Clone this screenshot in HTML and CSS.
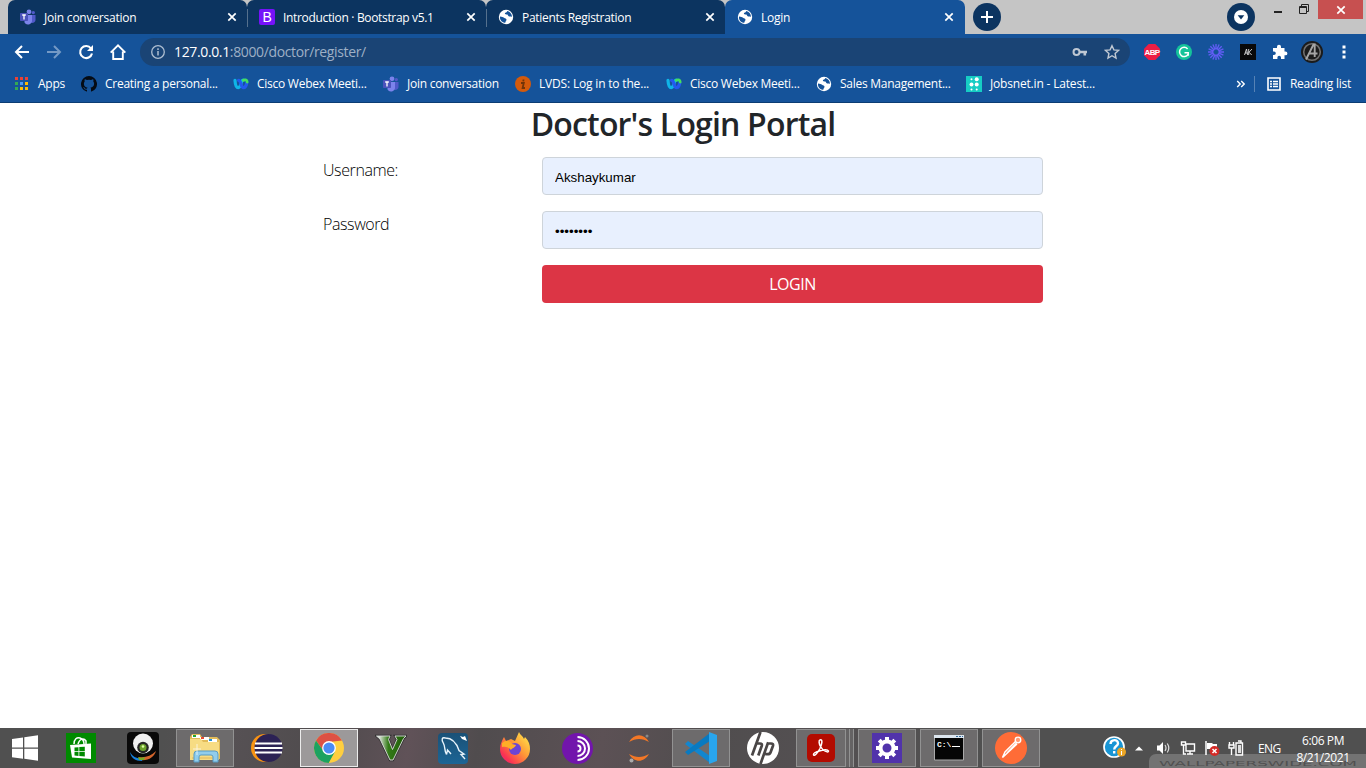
FILE: index.html
```html
<!DOCTYPE html>
<html lang="en">
<head>
<meta charset="utf-8">
<title>Login</title>
<link rel="stylesheet" href="styles.css">
</head>
<body>
<svg class="defs" width="0" height="0">
  <symbol id="teams" viewBox="0 0 16 16"><circle cx="9" cy="2.8" r="2.4" fill="#7b83eb"/><circle cx="13.3" cy="3.6" r="1.7" fill="#5059c9"/><path d="M10 6h5.5v5a3 3 0 0 1-4.5 2.5z" fill="#5059c9"/><path d="M4.500 6H12v5.500a4 4 0 0 1-7.500 2z" fill="#7b83eb"/><rect y="4" width="8" height="8" rx=".8" fill="#4b53bc"/><path d="M2.200 6h3.600M4 6v4.500" stroke="#fff" stroke-width="1.300"/></symbol>
  <symbol id="globe" viewBox="0 0 16 16"><circle cx="8" cy="8" r="7.200" fill="#fff"/><path d="M2 7.400c2 .4 3 .4 4 1.400 1 .9 2.500.5 2.500 2 0 1.100-1 1.300-1.200 3C4 13.500 1.600 11 2 7.400zM9.200 2c-.2 1.500-2 1.500-2.300 2.300-.3 1.100 1.300 1.300 2.300 1.300.9.100.7 1.700 1.900 1.800 1.300.1 1.800-.3 2.900.6 0-3-2-5.500-4.800-6z" fill="#15539a"/></symbol>
  <symbol id="webex" viewBox="0 0 16 16"><path d="M2 4.300C2.300 9 3.300 11.700 5.200 11.700S7.700 9 8.300 6.500 9.500 4 10.500 4" fill="none" stroke="#0fb5e8" stroke-width="3.200" stroke-linecap="round"/><path d="M5.600 4.300C8.300 4.300 7.500 11.700 10.500 11.700 12.600 11.700 13.300 9.500 13.800 7" fill="none" stroke="#2459ed" stroke-width="3.300" stroke-linecap="round"/><path d="M10.300 4.200C11.500 3.500 14.200 3.600 14.200 6" fill="none" stroke="#45df60" stroke-width="2.800" stroke-linecap="round"/></symbol>
  <symbol id="close" viewBox="0 0 10 10"><path d="M1.300 1.300l7.400 7.400M8.700 1.300L1.300 8.700" stroke="#fff" stroke-width="1.700"/></symbol>
</svg>

<header class="browser">
  <div class="tabstrip">
    <div class="tab tab-first"><svg class="ico"><use href="#teams"/></svg><span>Join conversation</span><svg class="close"><use href="#close"/></svg></div>
    <div class="tab"><b class="boot">B</b><span>Introduction · Bootstrap v5.1</span><svg class="close"><use href="#close"/></svg></div>
    <div class="tab"><svg class="ico"><use href="#globe"/></svg><span>Patients Registration</span><svg class="close"><use href="#close"/></svg></div>
    <div class="tab active"><svg class="ico"><use href="#globe"/></svg><span>Login</span><svg class="close"><use href="#close"/></svg></div>
    <svg class="newtab" viewBox="0 0 28 28"><circle cx="14" cy="14" r="14" fill="#0c3460"/><path d="M8 14h12M14 8v12" stroke="#fff" stroke-width="2"/></svg>
    <svg class="tabsearch" viewBox="0 0 28 28"><circle cx="14" cy="14" r="14" fill="#0c3460"/><circle cx="14" cy="14" r="7" fill="#fff"/><path d="M10.700 12.300h6.600L14 16.600z" fill="#0c3460"/></svg>
    <svg class="winctl" viewBox="0 0 46 20"><path d="M4 12h8" stroke="#222" stroke-width="2"/><path d="M29.500 6.500h7v7h-7zM29 7.500h8M31.500 6V4.500h7v7H37" fill="none" stroke="#222"/></svg>
    <div class="winclose"><svg class="wx"><use href="#close"/></svg></div>
  </div>

  <div class="toolbar">
    <svg class="nav" viewBox="0 0 16 16"><path d="M15 8H2.500M8 2L2 8l6 6" fill="none" stroke="#fff" stroke-width="2"/></svg>
    <svg class="nav" viewBox="0 0 16 16"><path d="M1 8h12.500M8 2l6 6-6 6" fill="none" stroke="#7499c5" stroke-width="2"/></svg>
    <svg class="nav" viewBox="0 0 16 16"><path d="M13 4.500A6 6 0 1 0 14 9.500" fill="none" stroke="#fff" stroke-width="2.100"/><path d="M15 1v6H9z" fill="#fff"/></svg>
    <svg class="nav" viewBox="0 0 16 16"><path d="M.7 8.700L8 1.400l7.300 7.300M3.200 7.500V15h9.600V7.500" fill="none" stroke="#fff" stroke-width="1.900"/></svg>
    <div class="omnibox">
      <svg class="info" viewBox="0 0 16 16"><circle cx="8" cy="8" r="6.300" fill="none" stroke="#aebed1" stroke-width="1.300"/><path d="M8 7v4.500M8 4.300V6" stroke="#aebed1" stroke-width="1.500"/></svg>
      <span class="url"><span class="host">127.0.0.1</span>:8000/doctor/register/</span>
      <svg class="key" viewBox="0 0 16 16"><circle cx="4.500" cy="8" r="3" fill="none" stroke="#bfc8d3" stroke-width="2"/><path d="M7 8h8M12.800 8v3.500" stroke="#bfc8d3" stroke-width="2.600"/></svg>
      <svg class="star" viewBox="0 0 16 16"><path d="M8 1.700l1.900 4.200 4.600.5-3.400 3.100.9 4.500L8 11.700 4 14l.9-4.500-3.400-3.100 4.600-.5z" fill="none" stroke="#c1c9d3" stroke-width="1.400"/></svg>
    </div>
    <div class="exts">
      <svg class="ext" viewBox="0 0 16 16"><path d="M4.700 0h6.600L16 4.700v6.600L11.300 16H4.700L0 11.300V4.700z" fill="#ed1e45"/><text x="8" y="10.900" class="abp">ABP</text></svg>
      <svg class="ext" viewBox="0 0 16 16"><circle cx="8" cy="8" r="8" fill="#15c39a"/><path d="M11.600 4.900A4.600 4.600 0 1 0 12 10.500M8.500 8.800h3.700v3" fill="none" stroke="#fff" stroke-width="1.500"/></svg>
      <svg class="ext" viewBox="0 0 16 16"><path d="M8 0v5.500M8 10.500V16M0 8h5.500M10.500 8H16M2.300 2.300l4 4M9.700 9.700l4 4M13.700 2.300l-4 4M6.300 9.700l-4 4M4.900.6l2.200 5M8.900 10.400l2.200 5M11.100.6l-2.200 5M7.100 10.400l-2.200 5M.6 4.900l5 2.200M10.400 8.900l5 2.200M.6 11.100l5-2.200M10.400 7.100l5-2.200" stroke="#625df5" stroke-width="1.350"/></svg>
      <svg class="ext" viewBox="0 0 16 16"><path d="M0 0h16v16H0z" fill="#090909"/><path d="M4.500 11l2-6 1.200 6M5 9h2.500M8.700 5v6M12 5L9 8.200l2.700 2.800" fill="none" stroke="#ddd" stroke-width=".9"/></svg>
      <svg class="ext" viewBox="0 0 16 16"><path d="M1 4h4V2.800a2 2 0 0 1 4 0V4h3.500v3.500h1a1.900 1.900 0 0 1 0 3.800h-1V15H9v-1.500a1.800 1.800 0 0 0-3.600 0V15H1v-4h1a1.800 1.800 0 0 0 0-3.600H1z" fill="#fff"/></svg>
      <svg class="avatar" viewBox="0 0 22 22"><circle cx="11" cy="11" r="11" fill="#1b1b1b"/><circle cx="11" cy="11" r="8.300" fill="none" stroke="#707070" stroke-width="1.600"/><path d="M5 18.500L12.500 3.500h1.200V16M8 12.500h8.500" fill="none" stroke="#a5a5a5" stroke-width="1.900"/></svg>
      <svg class="dots" viewBox="0 0 4 16"><path d="M.5 1.500h3v3h-3zM.5 6.500h3v3h-3zM.5 11.500h3v3h-3z" fill="#fff"/></svg>
    </div>
  </div>

  <div class="bookmarks">
    <div class="bm w67"><svg class="ico" viewBox="0 0 16 16"><path d="M1 1h3v3H1zM6 1h3v3H6zM11 1h3v3h-3z" fill="#ea4335"/><path d="M1 6h3v3H1z" fill="#34a853"/><path d="M6 6h3v3H6z" fill="#4c9bf5"/><path d="M11 6h3v3h-3zM6 11h3v3H6zM11 11h3v3h-3z" fill="#fbbc05"/><path d="M1 11h3v3H1z" fill="#34a853"/></svg><span>Apps</span></div>
    <div class="bm w152"><svg class="ico" viewBox="0 0 16 16"><path d="M8 0a8 8 0 0 0-2.500 15.600c.4.100.5-.2.500-.4v-1.500c-2.200.5-2.700-.9-2.700-.9-.4-.9-.9-1.200-.9-1.200-.7-.5.100-.5.100-.5.800.1 1.200.8 1.200.8.7 1.300 1.900.9 2.300.7.100-.5.300-.9.500-1.100-1.800-.2-3.600-.9-3.600-4 0-.8.300-1.600.8-2.100-.1-.2-.4-1 .1-2.100 0 0 .7-.2 2.200.8a7 7 0 0 1 4 0c1.500-1 2.200-.8 2.200-.8.400 1.100.2 1.900.1 2.100.5.600.8 1.300.8 2.100 0 3.100-1.900 3.800-3.700 4 .3.300.6.800.6 1.500v2.200c0 .2.100.5.500.4A8 8 0 0 0 8 0z" fill="#050b14"/></svg><span>Creating a personal...</span></div>
    <div class="bm w150"><svg class="ico"><use href="#webex"/></svg><span>Cisco Webex Meeti...</span></div>
    <div class="bm w132"><svg class="ico"><use href="#teams"/></svg><span>Join conversation</span></div>
    <div class="bm w151 wide"><svg class="ico" viewBox="0 0 16 16"><circle cx="8" cy="8" r="8" fill="#d45a0b"/><path d="M6 7h2.800l-1.200 5H10M8.500 3.500L8.300 5.300" fill="none" stroke="#713408" stroke-width="1.800"/></svg><span>LVDS: Log in to the...</span></div>
    <div class="bm w150"><svg class="ico"><use href="#webex"/></svg><span>Cisco Webex Meeti...</span></div>
    <div class="bm w150"><svg class="ico"><use href="#globe"/></svg><span>Sales Management...</span></div>
    <div class="bm wide"><svg class="ico" viewBox="0 0 16 16"><path d="M0 0h16v16H0z" fill="#16cdc4"/><g fill="#fff"><circle cx="5.500" cy="3.300" r="1"/><circle cx="10.700" cy="3.300" r="2"/><circle cx="5.500" cy="8.500" r="2"/><circle cx="10.700" cy="8.500" r="2"/><circle cx="5.500" cy="13.500" r="1"/><circle cx="10.700" cy="13.500" r="1"/></g></svg><span>Jobsnet.in - Latest...</span></div>
    <div class="reading"><svg class="chev" viewBox="0 0 8 8"><path d="M.7 1l3 3-3 3M4.700 1l3 3-3 3" fill="none" stroke="#fff" stroke-width="1.400"/></svg><i class="sep"></i><svg class="list" viewBox="0 0 14 14"><path d="M1 1h12v12H1z" fill="none" stroke="#fff" stroke-width="1.600"/><path d="M3 4.500h2M6 4.500h5M3 7h2M6 7h5M3 9.500h2M6 9.500h5" stroke="#fff" stroke-width="1.300"/></svg><span>Reading list</span></div>
  </div>
</header>

<main class="page">
  <h1 class="title">Doctor's Login Portal</h1>
  <form class="form">
    <label class="label" for="user">Username:</label><input class="field" id="user" type="text" value="Akshaykumar">
    <label class="label" for="pass">Password</label><input class="field" id="pass" type="password" value="12345678">
    <button class="login" type="button">LOGIN</button>
  </form>
</main>

<footer class="taskbar">
  <div class="slot start"><svg width="28" height="26" viewBox="0 0 28 26"><path d="M1 4l11-1.600v10H1zM13.300 2.200L27 .2v12.200H13.300zM1 13.700h11v10L1 22.200zM13.300 13.700H27v12.100L13.300 23.800z" fill="#fff"/></svg></div>
  <div class="slot"><svg width="30" height="30" viewBox="0 0 30 30"><path d="M0 0h30v30H0z" fill="#008a00"/><path d="M4 12l21-1.500V26L6 24.500z" fill="#fff"/><path d="M8 11c0-5 3-7 6-6s4 3 4 6M12 11c2-6 6-6 8-3v3" fill="none" stroke="#fff" stroke-width="1.500"/><path d="M8.500 14.500l4-.3v4h-4zM13.300 14.100l5.500-.4v4.500h-5.500zM8.500 19h4v4l-4-.4zM13.300 19h5.500v4.600l-5.500-.5z" fill="#008a00"/></svg></div>
  <div class="slot"><svg width="32" height="32" viewBox="0 0 32 32"><rect width="32" height="32" rx="4" fill="#090909"/><path d="M3 20c3 6 9 7 13 6l-1 3C8 29 4 26 3 20z" fill="#1682df"/><path d="M12 25c6 1 12-1 17-6-2 6-7 10-16 9z" fill="#d4652c"/><path d="M11 25c2 1 5 1 7 0l-1 3h-5z" fill="#75a928"/><circle cx="16" cy="11.500" r="10" fill="#f0f0f0"/><circle cx="16" cy="15.500" r="5.800" fill="#252525"/><circle cx="16" cy="15.500" r="3.500" fill="#6ba12b"/><circle cx="16" cy="14.500" r="1.300" fill="#dfffa5"/></svg></div>
  <div class="slot open"><svg width="34" height="32" viewBox="0 0 34 32"><path d="M2 5l2-3h8l2 3h15l3 3v19H2z" fill="#e1bb59"/><path d="M4 3h8v3H4zM12 5h9v3h-9zM20 7h9v3h-9z" fill="#fff"/><path d="M5 3h3v2H5z" fill="#24a32f"/><path d="M13 5h3v2h-3z" fill="#e64c30"/><path d="M21 7h3v2h-3z" fill="#2491d6"/><path d="M2 7h11l2 3h16v18H2z" fill="#f7dc83"/><path d="M4 26h24" stroke="#dfb65b"/><path d="M6 30v-8q0-3 3-3h18q3 0 3 3v8h-5v-5q0-2-2-2H13q-2 0-2 2v5z" fill="#91cdec" stroke="#579bc5"/><path d="M9 12v11M5 17h8" stroke="#fff" opacity=".7"/></svg></div>
  <div class="slot"><svg width="34" height="30" viewBox="0 0 34 30"><circle cx="15" cy="15" r="14" fill="#f99413"/><circle cx="18.500" cy="15" r="14" fill="#2c2255"/><path d="M5 10.500h27M4.500 15h28M5 19.500h27" stroke="#fff" stroke-width="2"/></svg></div>
  <div class="slot open current"><svg width="30" height="30" viewBox="0 0 30 30"><circle cx="15" cy="15" r="15" fill="#ffcf3f"/><path d="M2 7.500A15 15 0 0 1 28 7.500L15 9l-5.500 9z" fill="#dd5144"/><path d="M2 7.500A15 15 0 0 0 14.700 30L21 18.500 9.500 18z" fill="#1ca261"/><circle cx="15" cy="15" r="6.900" fill="#fff"/><circle cx="15" cy="15" r="5.600" fill="#4b8bf4"/></svg></div>
  <div class="slot"><svg width="32" height="28" viewBox="0 0 32 28"><defs><linearGradient id="vee" x1="0" x2="1"><stop offset=".1" stop-color="#dce5d8"/><stop offset=".4" stop-color="#347b19"/><stop offset="1" stop-color="#1f5c08"/></linearGradient></defs><path d="M1.500 2H15l-1.500 3.500 4 10L22 5.500 20 2h11l-2.500 2.500L18 26h-3L5 5z" fill="url(#vee)" stroke="#333" stroke-width="2.400"/><path d="M1.500 2H15l-1.500 3.500 4 10L22 5.500 20 2h11l-2.500 2.500L18 26h-3L5 5z" fill="url(#vee)" stroke="#ddd" stroke-width=".9"/></svg></div>
  <div class="slot"><svg width="32" height="32" viewBox="0 0 32 32"><defs><linearGradient id="sea" x1="0" y1="0" x2="0" y2="1"><stop stop-color="#1a5177"/><stop offset="1" stop-color="#1d6595"/></linearGradient></defs><rect x="1" y="1" width="30" height="31" rx="4" fill="url(#sea)"/><path d="M9.500 22.500C7 18 8.500 15 6.500 11.500 4 7 5 5 8.500 6c7 0 11 5 13.500 12.500l5 3.500-3 .5 4 4.500M9.500 22.500l1-4.500 3.500 4" fill="none" stroke="#e9f4fb" stroke-width="1.400"/><path d="M23 4l2 3 5 2-2-5-2 1z" fill="#fff"/></svg></div>
  <div class="slot"><svg width="32" height="32" viewBox="0 0 32 32"><defs><linearGradient id="fox" x1="1" y1="0" x2="0" y2="1"><stop stop-color="#fff44f"/><stop offset=".45" stop-color="#ff9736"/><stop offset=".8" stop-color="#fa3054"/><stop offset="1" stop-color="#dc2890"/></linearGradient></defs><path d="M20 0c1 3 4 4 5 7l1-2c4 4 5 8 5 12a15 15 0 0 1-30 0c0-5 2-8 4-12l2 4 5-2 4 2z" fill="url(#fox)"/><circle cx="16" cy="17" r="6" fill="#6b44d4"/><path d="M3 11c5-4 8-2 10 1l4 1c-1 3-4 3-5 5-3-3-5-4-9-3z" fill="#ffad27"/></svg></div>
  <div class="slot"><svg width="31" height="31" viewBox="0 0 31 31"><circle cx="15.500" cy="15.500" r="15.500" fill="#7215ac"/><path d="M15.500 4a11.500 11.500 0 0 1 0 23M15.500 8a7.500 7.500 0 0 1 0 15M15.500 12.500a3 3 0 0 1 0 6" fill="none" stroke="#fff" stroke-width="2"/></svg></div>
  <div class="slot"><svg width="30" height="32" viewBox="0 0 30 32"><path d="M5 10c5-9 15-9 20 0-7-4-13-4-20 0zM5 22c5 9 15 9 20 0-7 4-13 4-20 0z" fill="#f37726"/><circle cx="23" cy="4" r="1.500" fill="#888"/><circle cx="7.500" cy="28.500" r="2" fill="#aaa"/></svg></div>
  <div class="slot open"><svg width="32" height="32" viewBox="0 0 32 32"><path d="M0 12l3-3 22 15v7z" fill="#1286cf"/><path d="M0 20l3 3L25 9V1z" fill="#087ac1"/><path d="M24 0l8 3v26l-8 3z" fill="#29a5ed"/></svg></div>
  <div class="slot"><svg width="32" height="32" viewBox="0 0 32 32"><circle cx="16" cy="16" r="16" fill="#fff"/><path d="M13.500 0L5 23.500M9.500 11.500H13q2.500 0 1.700 2.500l-3.400 9.500" fill="none" stroke="#4a4646" stroke-width="2.700"/><path d="M21.200 10.200L13.500 32M20.500 11.500H24q2.700 0 1.900 2.500l-2.300 6.200q-.7 2-3 2h-2.300" fill="none" stroke="#4a4646" stroke-width="2.700"/></svg></div>
  <div class="stack"><div class="slot open"><svg width="28" height="28" viewBox="0 0 28 28"><rect width="28" height="28" rx="5" fill="#b30b00"/><path d="M13 6c3-1 2 4 0 8.500-2 4-6 8.500-6.500 6C6 18 20 14 21.500 17c0 2.500-6-.5-8-4.500-1.500-3-2-6-.5-6.500z" fill="none" stroke="#fff" stroke-width="1.500"/></svg></div></div>
  <div class="slot open"><svg width="30" height="30" viewBox="0 0 30 30"><path d="M0 0h30v30H0z" fill="#5133ab"/><circle cx="15" cy="15" r="6.500" fill="none" stroke="#fff" stroke-width="4"/><path d="M15 4v4M15 22v4M4 15h4M22 15h4M7.200 7.200l3 3M19.800 19.800l3 3M22.800 7.200l-3 3M10.200 19.800l-3 3" stroke="#fff" stroke-width="4"/></svg></div>
  <div class="slot open"><svg width="30" height="26" viewBox="0 0 30 26"><path d="M.5.500h29v24.500H.5z" fill="#050505" stroke="#aaa"/><path d="M0 0h30v3H0z" fill="#dce5ee"/><path d="M22 1.500h2M25 1.500h2M28 1.500h1" stroke="#356c9c"/><text class="cmd" x="3" y="12">C:\</text><path d="M18 11.500h8" stroke="#fff"/></svg></div>
  <div class="slot open"><svg width="32" height="32" viewBox="0 0 32 32"><circle cx="16" cy="16" r="16" fill="#ff6c37"/><circle cx="23" cy="8" r="2.800" fill="#ff9a75" stroke="#fff" stroke-width="1.300"/><path d="M20.500 9.500L10 20l-2.500 5.500L22 12M12 21L21.500 11" fill="none" stroke="#fff" stroke-width="1.500"/></svg></div>
  <div class="tray">
    <svg width="24" height="24" viewBox="0 0 24 24"><circle cx="11" cy="11" r="10" fill="#1995d4" stroke="#fff" stroke-width="1.700"/><path d="M7.500 8c.3-5 7.500-5 7.500-.6 0 2.600-3.800 2.600-3.800 6M11.200 15v2.500" fill="none" stroke="#fff" stroke-width="2.400"/><circle cx="18.500" cy="16" r="4.500" fill="#eba525"/><path d="M18.500 15v4M18.500 13v1" stroke="#fff"/></svg>
    <svg class="up" width="8" height="5" viewBox="0 0 8 5"><path d="M0 4.500L4 .5l4 4z" fill="#fff"/></svg>
    <svg class="t-ico" viewBox="0 0 16 16"><path d="M2 5.500h2.500L8 2v12l-3.500-3.500H2z" fill="#fff"/><path d="M10 5q2 3 0 6M12.300 3.500q3 4.500 0 9" fill="none" stroke="#ddd" stroke-width="1.200"/></svg>
    <svg class="t-ico t-net" viewBox="0 0 16 16"><path d="M6 4h8.500v7H6zM7 14h6M10 11v3M1.500 2h4v3h-4zM3.500 5v9H6" fill="none" stroke="#fff" stroke-width="1.400"/></svg>
    <svg class="t-ico t-flag" viewBox="0 0 16 16"><path d="M2 1v14" stroke="#fff" stroke-width="1.500"/><path d="M3 3h5l1 1h4v6H8L7 9H3z" fill="#fff"/><circle cx="10.500" cy="11" r="5" fill="#d42a26"/><path d="M8.500 9l4 4M12.500 9l-4 4" stroke="#fff" stroke-width="1.500"/></svg>
    <svg class="t-ico t-bat" viewBox="0 0 16 16"><path d="M8 3h6.500v12H8zM10 1h3v2h-3M3.500 8v7M1.500 2v3M5.500 2v3M1 5h5v3H1z" fill="none" stroke="#fff" stroke-width="1.400"/><path d="M10 5h3v8h-3z" fill="#ddd"/></svg>
    <span class="lang">ENG</span>
    <div class="clock"><span>6:06 PM</span><span>8/21/2021</span></div>
  </div>
  <div class="mark"><svg width="217" height="14" viewBox="0 0 217 14"><text class="mark-text" x="10" y="12" textLength="198" lengthAdjust="spacingAndGlyphs">WALLPAPERSWIDE.COM</text></svg></div>
</footer>
</body>
</html>
```
FILE: styles.css
```css
* { box-sizing: border-box; }
body { margin: 0; width: 1366px; height: 768px; display: flex; flex-direction: column; overflow: hidden; background: #fff; font-family: "Open Sans", "Noto Sans", sans-serif; }
svg { display: block; flex: none; }
.defs { position: absolute; }
.browser { height: 103px; flex: none; background: #15539a; border-bottom: 1px solid #0b3c73; color: #fff; font-size: 12px; white-space: nowrap; }
.tabstrip { height: 34px; display: flex; background: #c5c5c5; padding-left: 8px; }
.tab { width: 239px; height: 34px; padding: 0 10px 0 12px; display: flex; align-items: center; background: #0c3460; border-radius: 7px 7px 0 0; letter-spacing: -.27px; }
.tab-first { letter-spacing: -.22px; }
.tab:nth-child(2), .tab:nth-child(3) { background: linear-gradient(#55708d, #55708d) 0 9px / 1px 18px no-repeat #0c3460; letter-spacing: -.33px; }
.tab:nth-child(3) { letter-spacing: -.3px; }
.tab.active { width: 240px; background: #15539a; padding-right: 11px; }
.tab span { padding-left: 8px; flex: 1; }
.ico { width: 16px; height: 16px; }
.close { width: 10px; height: 10px; }
.boot { width: 16px; height: 16px; border-radius: 2px; background: #7512fa; font: 14px/16px "Liberation Sans", sans-serif; text-align: center; }
.newtab { width: 28px; height: 28px; margin: 3px 0 0 8px; }
.tabsearch { width: 28px; height: 28px; margin: 3px 0 0 226px; }
.winctl { width: 46px; height: 20px; margin-left: 15px; }
.winclose { width: 45px; height: 19px; margin-left: 2px; background: #c75050; display: flex; align-items: center; justify-content: center; }
.wx { width: 10px; height: 10px; }
.toolbar { height: 36px; display: flex; align-items: center; gap: 16px; padding-left: 14px; }
.nav { width: 16px; height: 16px; }
.omnibox { width: 990px; height: 28px; margin-left: -2px; border-radius: 14px; background: #1a4475; display: flex; align-items: center; padding: 0 10px; color: #9eb0c6; font-size: 14px; }
.info { width: 16px; height: 16px; }
.url { padding: 0 0 1px 8px; flex: 1; letter-spacing: -.36px; }
.host { color: #fff; }
.key { width: 16px; height: 16px; margin-right: 16px; }
.star { width: 16px; height: 16px; }
.exts { display: flex; align-items: center; gap: 16px; margin-left: -2px; }
.ext { width: 16px; height: 16px; overflow: visible; }
.abp { font: bold 8px "Liberation Sans", sans-serif; fill: #fff; text-anchor: middle; letter-spacing: -.6px; }
.avatar { width: 22px; height: 22px; margin-left: -3px; }
.dots { width: 4px; height: 16px; margin-left: 3px; }
.bookmarks { height: 28px; display: flex; align-items: center; padding-left: 14px; letter-spacing: -.26px; }
.bm { display: flex; align-items: center; gap: 8px; flex: none; }
.wide { letter-spacing: -.18px; }
.bm span, .reading span { padding-bottom: 1px; }
.w67 { width: 67px; }
.w132 { width: 132px; }
.w150 { width: 150px; }
.w151 { width: 151px; }
.w152 { width: 152px; }
.reading { display: flex; align-items: center; margin-left: auto; padding-right: 15px; }
.chev { width: 9px; height: 8px; }
.sep { width: 1px; height: 16px; margin: 0 12px 0 9px; background: #5682b5; }
.list { width: 14px; height: 14px; margin-right: 9px; }
.page { flex: 1; color: #212529; }
.title { margin: 2px 0 0; height: 38px; font-size: 32px; line-height: 38px; font-weight: 600; text-align: center; letter-spacing: -.82px; }
.form { width: 720px; margin: 14px 0 0 323px; display: grid; grid-template-columns: 219px 501px; grid-template-rows: 38px 38px 38px; row-gap: 16px; }
.label { font-size: 16px; line-height: 26px; font-weight: 300; letter-spacing: -.4px; color: #000; }
.field { width: 501px; height: 38px; border: 1px solid #ced4da; border-radius: 4px; background: #e8f0fe; padding: 3px 12px 0; font: 13.333px "Liberation Sans", sans-serif; color: #000; outline: 0; }
.login { grid-column: 2; border: 0; border-radius: 4px; background: #dc3545; color: #fff; font: 16px "Open Sans", sans-serif; letter-spacing: -.5px; }
.taskbar { position: relative; height: 40px; flex: none; display: flex; gap: 4px; padding: 1px 0; color: #fff; background: linear-gradient(100deg, #505050 0 12%, #565154 17%, #4f4b4d 24%, #605258 30%, #504c4e 35%, #5c5155 44%, #504d4e 52%, #545052 60%, #505050 72%); }
.slot { width: 58px; height: 38px; flex: none; display: flex; align-items: center; justify-content: center; }
.start { width: 48px; padding-left: 2px; }
.open { border: 1px solid #929292; background: #6d6b6c; }
.current { border-color: #ececec; background: #9c999a; }
.stack { width: 58px; height: 38px; flex: none; display: flex; border-right: 1px solid #929292; padding-right: 3px; background: #656364; }
.stack .slot { width: 50px; box-shadow: 3px 0 #656364, 4px 0 #929292; }
.cmd { font: bold 8px "Liberation Mono", monospace; fill: #fff; }
.tray { position: relative; z-index: 1; display: flex; align-items: center; margin-left: 59px; font-size: 12px; letter-spacing: -.4px; }
.up { margin: 0 12px 0 8px; }
.t-ico { width: 16px; height: 16px; }
.t-net { margin-left: 9px; }
.t-flag { margin-left: 8px; }
.t-bat { margin-left: 8px; }
.lang { width: 24px; margin-left: 14px; letter-spacing: -.6px; }
.clock { width: 60px; margin-left: 11px; display: flex; flex-direction: column; align-items: center; line-height: 17px; padding-top: 2px; }
.mark { position: absolute; right: 0; bottom: 0; width: 217px; height: 14px; border-radius: 7px 0 0 0; background: #737373; overflow: hidden; }
.mark-text { font: 7px "DejaVu Sans", sans-serif; fill: #505050; }
```
